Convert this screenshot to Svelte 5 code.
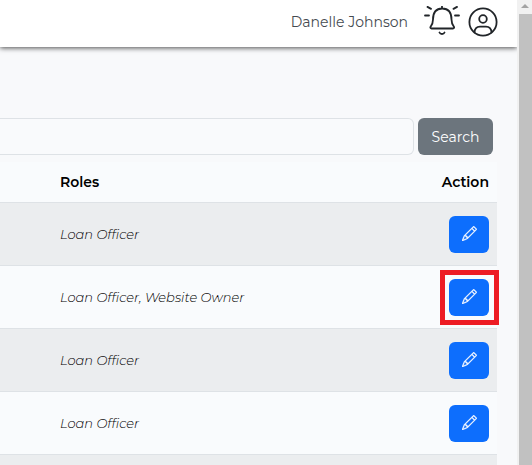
<script>
  const users = [
    { roles: "Loan Officer" },
    { roles: "Loan Officer, Website Owner", highlighted: true },
    { roles: "Loan Officer" },
    { roles: "Loan Officer" },
    { roles: "" },
  ];

  let query = $state("");
</script>

<div class="window">
  <div class="page">
    <header class="topbar">
      <span class="user-name">Danelle Johnson</span>
      <button class="icon-button" aria-label="Notifications">
        <svg width="36" height="32" viewBox="0 1 36 32">
          <path d="M18 1.500v2M7.500 23.500h21.500c1 0 1.400-.9.900-1.700-1.900-2.500-2.400-4.300-2.400-7.300 0-7-3-11-9.300-11S9 7.500 9 14.500c0 3-.5 4.800-2.400 7.300-.5.8-.1 1.700.9 1.700z" />
          <path d="M15.500 27.500c.8 2 4.200 2 5 0M1 10.500h4M31 10.500h4M3.500 1.900l3.500 2M33 1.900l-3.500 2" />
        </svg>
      </button>
      <button class="icon-button" aria-label="Account">
        <svg width="30" height="30" viewBox="0 0 30 30">
          <circle cx="15" cy="15" r="13.600" />
          <circle cx="15" cy="12" r="3.800" />
          <path d="M6.500 25.500c.2-3.600 2.300-5.900 5.500-5.900h6c3.200 0 5.300 2.300 5.500 5.900" />
        </svg>
      </button>
    </header>

    <main>
      <form class="search" onsubmit={(event) => event.preventDefault()}>
        <input type="text" aria-label="Search users" bind:value={query} />
        <button type="submit">Search</button>
      </form>

      <table>
        <thead>
          <tr>
            <th>Roles</th>
            <th class="action">Action</th>
          </tr>
        </thead>
        <tbody>
          {#each users as user}
            <tr>
              <td class="roles"><em>{user.roles}</em></td>
              <td class="action">
                <button class="edit" class:highlighted={user.highlighted} aria-label="Edit user">
                  <svg width="15" height="15" viewBox="0 0 16 16" fill="currentColor">
                    <path d="M12.146.146a.5.5 0 0 1 .708 0l3 3a.5.5 0 0 1 0 .708l-10 10a.5.5 0 0 1-.168.110l-5 2a.5.5 0 0 1-.650-.650l2-5a.5.5 0 0 1 .110-.168zM11.207 2.500 13.500 4.793 14.793 3.500 12.500 1.207zm1.586 3L10.500 3.207 4 9.707V10h.5a.5.5 0 0 1 .5.5v.5h.5a.5.5 0 0 1 .5.5v.5h.293zm-9.761 5.175-.106.106-1.528 3.821 3.821-1.528.106-.106A.5.5 0 0 1 5 12.500V12h-.5a.5.5 0 0 1-.5-.5V11h-.5a.5.5 0 0 1-.468-.325" />
                  </svg>
                </button>
              </td>
            </tr>
          {/each}
        </tbody>
      </table>
    </main>
  </div>

  <div class="scrollbar" aria-hidden="true">
    <svg width="15" height="14" viewBox="0 0 15 14"><path d="M4 8l4-4 4 4z" /></svg>
    <div class="thumb"></div>
  </div>
</div>

<style>
  :global(body) {
    margin: 0;
    background: #f8f9fb;
  }

  .window {
    display: flex;
    height: 100vh;
    overflow: hidden;
    color: #000;
    font-family: Montserrat, Inter, sans-serif;
    font-size: 14px;
  }

  button,
  input {
    font: inherit;
  }

  .page {
    flex: 1;
    min-width: 0;
  }

  .topbar {
    display: flex;
    align-items: center;
    justify-content: flex-end;
    height: 47px;
    box-sizing: border-box;
    padding: 0 19px 4px 0;
    background: #fff;
    box-shadow: 0 1px 5px rgba(0, 0, 0, 0.7);
  }

  .user-name {
    margin-right: 16px;
    color: #444a50;
  }

  .icon-button {
    display: flex;
    padding: 0;
    border: none;
    background: none;
    cursor: pointer;
  }

  .icon-button + .icon-button {
    margin-left: 8px;
  }

  .icon-button svg {
    fill: none;
    stroke: #212529;
    stroke-width: 1.8;
    stroke-linecap: round;
    stroke-linejoin: round;
  }

  main {
    padding: 71px 20px 0 0;
  }

  .search {
    display: flex;
    gap: 4px;
    margin-right: 4px;
  }

  .search input {
    flex: 1;
    min-width: 0;
    box-sizing: border-box;
    height: 37px;
    padding: 6px 12px;
    border: 1px solid #dee2e6;
    border-left: none;
    border-radius: 0 6px 6px 0;
    background: #f9fafc;
  }

  .search button {
    width: 75px;
    padding: 0;
    border: none;
    border-radius: 6px;
    background: #6c757d;
    color: #fff;
    cursor: pointer;
  }

  table {
    width: 100%;
    margin-top: 7px;
    border-collapse: separate;
    border-spacing: 0;
    background: #f9fbfd;
  }

  th,
  td {
    border-bottom: 1px solid #dee2e6;
    text-align: left;
  }

  th {
    height: 40px;
    padding: 0 8px 0 60px;
    font-weight: 600;
  }

  td {
    padding: 13px 8px 12px 60px;
  }

  .roles {
    padding: 12px 8px 12px 60px;
    font-size: 13px;
    font-weight: 300;
  }

  .action {
    width: 60px;
    padding-left: 8px;
    text-align: right;
  }

  tbody tr:nth-child(odd) {
    background: #ebedef;
  }

  .edit {
    display: inline-flex;
    align-items: center;
    justify-content: center;
    width: 40px;
    height: 37px;
    padding: 0 0 2px;
    border: none;
    border-radius: 6px;
    background: #0d6efd;
    color: #fff;
    vertical-align: top;
    cursor: pointer;
  }

  .edit svg {
    stroke: currentColor;
    stroke-width: 0.3;
  }

  .highlighted {
    position: relative;
  }

  /* square frame drawn around the button */
  .highlighted::after {
    content: "";
    position: absolute;
    inset: -9px -10px -9px -9px;
    border: 5px solid #ed1c24;
  }

  .scrollbar {
    display: flex;
    flex-direction: column;
    width: 15px;
    background: #f1f1f1;
  }

  .scrollbar svg {
    fill: #a3a3a3;
  }

  .thumb {
    flex: 1;
    margin-left: 2px;
    background: #c1c1c1;
  }
</style>
